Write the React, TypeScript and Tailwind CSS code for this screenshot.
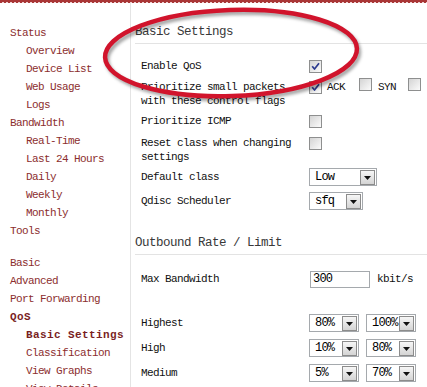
import React from "react";

const mono = "font-['Liberation_Mono','DejaVu_Sans_Mono',monospace]";

type NavItem = { t: string; sub?: boolean; bold?: boolean; gap?: boolean };

const nav: NavItem[] = [
  { t: "Status" },
  { t: "Overview", sub: true },
  { t: "Device List", sub: true },
  { t: "Web Usage", sub: true },
  { t: "Logs", sub: true },
  { t: "Bandwidth" },
  { t: "Real-Time", sub: true },
  { t: "Last 24 Hours", sub: true },
  { t: "Daily", sub: true },
  { t: "Weekly", sub: true },
  { t: "Monthly", sub: true },
  { t: "Tools" },
  { t: "Basic", gap: true },
  { t: "Advanced" },
  { t: "Port Forwarding" },
  { t: "QoS", bold: true },
  { t: "Basic Settings", sub: true, bold: true },
  { t: "Classification", sub: true },
  { t: "View Graphs", sub: true },
  { t: "View Details", sub: true },
];

function Checkbox({ checked }: { checked?: boolean }) {
  return (
    <span className="relative inline-block w-[13px] h-[13px] shrink-0 border border-[#8e8f8f] bg-[linear-gradient(135deg,#d4d4d4,#fbfbfb)]">
      {checked && (
        <svg width="11" height="11" viewBox="0 0 11 11" className="absolute left-0 top-0">
          <path d="M2.2 5.2 L4.5 8 L9 2.2" fill="none" stroke="#2b3a8f" strokeWidth="1.7" strokeLinejoin="round" />
        </svg>
      )}
    </span>
  );
}

function Select({ value, w }: { value: string; w: string }) {
  return (
    <div className={`flex h-[18px] items-center border border-[#a5a9ad] bg-white p-[1px] ${w}`}>
      <span className={`flex-1 pl-[4px] text-[12px] leading-[14px] tracking-[-0.8px] text-black ${mono}`}>{value}</span>
      <span className="flex h-[15px] w-[15px] items-center justify-center border border-[#8c8c8c] bg-[linear-gradient(180deg,#f6f6f6,#d4d4d4)]">
        <svg width="7" height="4" viewBox="0 0 7 4" className="mt-[2px]">
          <path d="M0 0 L7 0 L3.5 4 Z" fill="#111" />
        </svg>
      </span>
    </div>
  );
}

function Row({ label, mt, children, tall, center }: { label: React.ReactNode; mt: string; children?: React.ReactNode; tall?: boolean; center?: boolean }) {
  return (
    <div className={`flex ${center ? "items-center h-[18px]" : "items-start"} ${mt}`}>
      <div className={`w-[168px] shrink-0 leading-[14px] ${tall ? "h-[28px]" : ""}`}>{label}</div>
      <div className={`flex items-center ${center ? "" : "h-[14px]"}`}>{children}</div>
    </div>
  );
}

export default function App() {
  return (
    <div className={`relative h-[387px] w-[427px] overflow-hidden bg-white ${mono}`}>
      <div className="h-[2px] bg-[#a93636]" />
      <div className="h-[1px] bg-[repeating-linear-gradient(90deg,#a93636_0_2px,#efd2d2_2px_4px)]" />
      <div className="flex">
        <div className="w-[131px] shrink-0 border-r border-[#e4e4e4] pt-[21px] h-[400px]">
          {nav.map((n) => (
            <div
              key={n.t}
              className={`h-[18px] whitespace-nowrap text-[11px] leading-[18px] ${n.sub ? "pl-[26px]" : "pl-[10px]"} ${n.gap ? "mt-[14px]" : ""} ${n.bold ? "font-bold tracking-[0.4px] text-[#7a1f1f]" : "tracking-[-0.6px] text-[#8c2e2e]"}`}
            >
              {n.t}
            </div>
          ))}
        </div>
        <div className="flex-1 pl-[4px] text-[11px] tracking-[-0.6px] text-[#111]">
          <div className="mt-[21px] border-b border-[#e3e3e3] pb-[3px] text-[12.5px] leading-[16px] tracking-[-0.5px] text-[#383838]">
            Basic Settings
          </div>
          <div className="pl-[6px]">
            <Row label="Enable QoS" mt="mt-[15px]">
              <Checkbox checked />
            </Row>
            <Row label={<>Prioritize small packets<br />with these control flags</>} mt="mt-[7px]" tall>
              <Checkbox checked />
              <span className="ml-[5px] whitespace-nowrap">ACK</span>
              <span className="ml-[14px]"><Checkbox /></span>
              <span className="ml-[6px] whitespace-nowrap">SYN</span>
              <span className="ml-[12px]"><Checkbox /></span>
              <span className="ml-[6px] whitespace-nowrap">FIN</span>
            </Row>
            <Row label="Prioritize ICMP" mt="mt-[6px]">
              <Checkbox />
            </Row>
            <Row label={<>Reset class when changing<br />settings</>} mt="mt-[8px]" tall>
              <Checkbox />
            </Row>
            <Row label="Default class" mt="mt-[4px]" center>
              <Select value="Low" w="w-[68px]" />
            </Row>
            <Row label="Qdisc Scheduler" mt="mt-[6px]" center>
              <Select value="sfq" w="w-[54px]" />
            </Row>
          </div>
          <div className="-ml-0 mt-[25px] border-b border-[#e3e3e3] pb-[3px] text-[12.5px] leading-[16px] tracking-[-0.5px] text-[#383838]">
            Outbound Rate / Limit
          </div>
          <div className="pl-[6px]">
            <Row label="Max Bandwidth" mt="mt-[15px]" center>
              <div className="ml-[1px] flex h-[17px] w-[60px] items-center border border-[#a5a9ad] pl-[2px] text-[12px] tracking-[-0.8px] text-black">
                300
              </div>
              <span className="ml-[7px] whitespace-nowrap">kbit/s</span>
            </Row>
            <Row label="Highest" mt="mt-[26px]" center>
              <Select value="80%" w="w-[50px]" />
              <span className="ml-[7px]"><Select value="100%" w="w-[50px]" /></span>
            </Row>
            <Row label="High" mt="mt-[7px]" center>
              <Select value="10%" w="w-[50px]" />
              <span className="ml-[7px]"><Select value="80%" w="w-[50px]" /></span>
            </Row>
            <Row label="Medium" mt="mt-[7px]" center>
              <Select value="5%" w="w-[50px]" />
              <span className="ml-[7px]"><Select value="70%" w="w-[50px]" /></span>
            </Row>
          </div>
        </div>
      </div>
      <svg className="pointer-events-none absolute left-0 top-0" width="427" height="387" viewBox="0 0 427 387">
        <defs>
          <filter id="sh" x="-20%" y="-20%" width="140%" height="140%">
            <feGaussianBlur stdDeviation="1.6" />
          </filter>
        </defs>
        <g transform="rotate(-2 231 53)">
          <ellipse cx="233" cy="56" rx="126" ry="43" fill="none" stroke="#000" strokeOpacity="0.35" strokeWidth="4.5" filter="url(#sh)" />
          <ellipse cx="231" cy="53" rx="126" ry="43" fill="none" stroke="#d1142c" strokeWidth="4.5" />
        </g>
      </svg>
    </div>
  );
}
